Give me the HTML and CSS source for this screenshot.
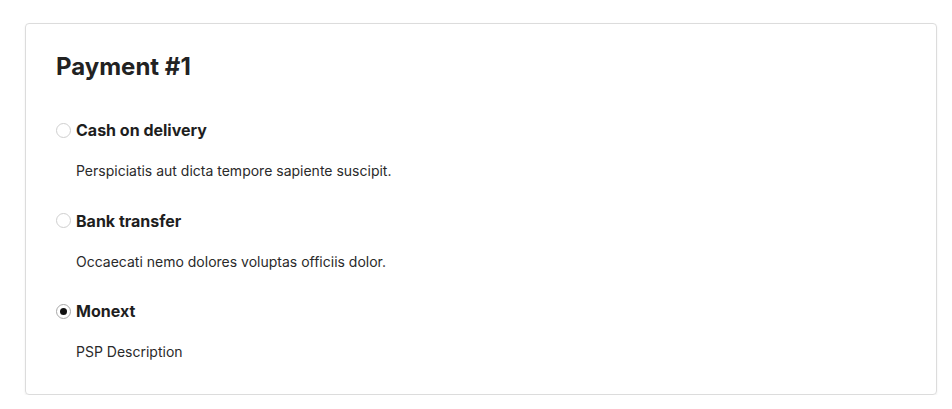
FILE: index.html
```html
<!DOCTYPE html>
<html lang="en">
<head>
<meta charset="utf-8">
<title>Payment</title>
<link rel="stylesheet" href="styles.css">
</head>
<body>
<section class="card">
  <h2 class="title">Payment #1</h2>
  <div class="methods">
    <div class="method">
      <label class="option"><input type="radio" name="pay" class="radio"><span class="name">Cash on delivery</span></label>
      <p class="desc">Perspiciatis aut dicta tempore sapiente suscipit.</p>
    </div>
    <div class="method">
      <label class="option"><input type="radio" name="pay" class="radio"><span class="name">Bank transfer</span></label>
      <p class="desc">Occaecati nemo dolores voluptas officiis dolor.</p>
    </div>
    <div class="method">
      <label class="option"><input type="radio" name="pay" class="radio" checked><span class="name">Monext</span></label>
      <p class="desc">PSP Description</p>
    </div>
  </div>
</section>
</body>
</html>
```

FILE: styles.css
```css
html, body {
  margin: 0;
  background: #fff;
}
body {
  padding: 23px 15px 0 25px;
  font-family: Inter, "Noto Sans", sans-serif;
  color: #222;
}
.card {
  border: 1px solid #dcdcdc;
  border-radius: 4px;
  box-shadow: 0 1px 2px rgba(0,0,0,0.08);
  padding: 28px 30px 26px;
  height: 372px;
  box-sizing: border-box;
}
.title {
  margin: 0;
  font-size: 24px;
  line-height: 30px;
  font-weight: 700;
  color: #222;
}
.methods {
  margin-top: 37px;
  display: flex;
  flex-direction: column;
  gap: 28.5px;
}
.method {
  display: flex;
  flex-direction: column;
  gap: 20px;
}
.option {
  display: flex;
  align-items: center;
  gap: 5px;
  height: 22px;
}
.radio {
  appearance: none;
  -webkit-appearance: none;
  margin: 0;
  width: 15px;
  height: 15px;
  border: 1px solid #cfcfcf;
  border-radius: 50%;
  box-sizing: border-box;
  background: #fff;
  display: grid;
  place-items: center;
}
.radio:checked {
  border-color: #a8a8a8;
}
.radio:checked::after {
  content: "";
  width: 7px;
  height: 7px;
  border-radius: 50%;
  background: #111;
}
.name {
  font-size: 16px;
  font-weight: 650;
  line-height: 22px;
  color: #1e1e1e;
}
.desc {
  margin: 0 0 0 20px;
  font-size: 14px;
  line-height: 20px;
  color: #2a2a2a;
}
```
